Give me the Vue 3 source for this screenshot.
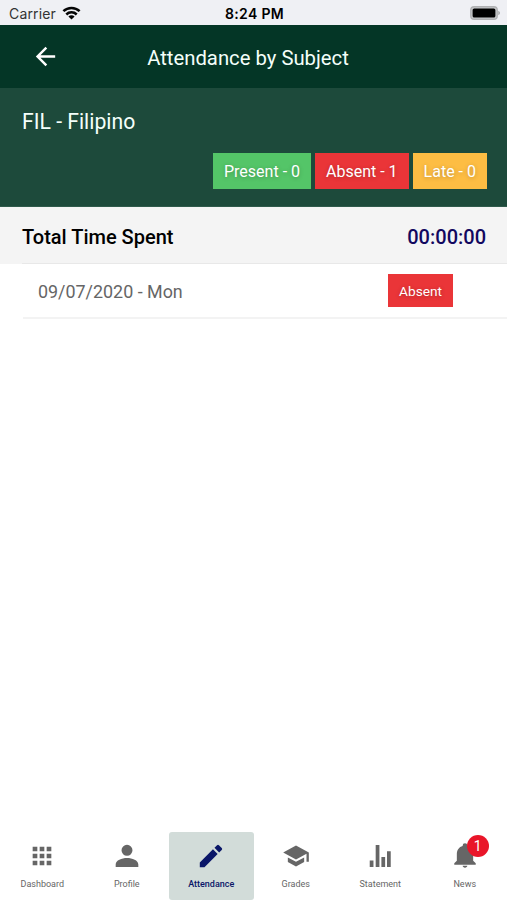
<template>
	<div class="screen">
		<div class="status">
			<div class="carrier">
				<span>Carrier</span>
				<svg class="wifi" viewBox="0 0 18 14">
					<g fill="none" stroke="#050505" stroke-width="2.5">
						<path d="M.9 5.2a11.6 11.6 0 0 1 16.2 0"/>
						<path d="M3.8 8.5a7.4 7.4 0 0 1 10.4 0"/>
					</g>
					<path fill="#050505" d="M9 13.6 5.9 10.5a4.4 4.4 0 0 1 6.2 0z"/>
				</svg>
			</div>
			<span class="clock">8:24 PM</span>
			<svg class="battery" viewBox="0 0 30 14">
				<rect x=".8" y=".7" width="26.4" height="12.6" rx="3.4" fill="#c9cacc" stroke="#b0b1b3" stroke-width="1.4"/>
				<rect x="2.6" y="2.4" width="22.8" height="9.2" rx="1.6" fill="#000"/>
				<path d="M28.3 4.8v4.4q1.7-.7 1.7-2.2t-1.7-2.2z" fill="#a5a6a8"/>
			</svg>
		</div>

		<header class="header">
			<svg class="back" viewBox="0 0 24 24"><path d="M20 11H7.83l5.59-5.59L12 4l-8 8 8 8 1.41-1.41L7.83 13H20v-2z"/></svg>
			<h1>Attendance by Subject</h1>
		</header>

		<section class="subject">
			<h2>FIL - Filipino</h2>
			<div class="counts">
				<span v-for="c in counts" :key="c.type" class="chip" :class="c.type">{{ c.label }} - {{ c.value }}</span>
			</div>
		</section>

		<section class="total">
			<span>Total Time Spent</span>
			<span class="time">00:00:00</span>
		</section>

		<ul class="list">
			<li v-for="r in records" :key="r.date">
				<span class="date">{{ r.date }}</span>
				<span class="chip small absent">{{ r.status }}</span>
			</li>
		</ul>

		<nav class="tabs">
			<a v-for="t in tabs" :key="t.label" class="tab" :class="{active: t.label === current}" @click="current = t.label">
				<span class="icon">
					<svg viewBox="0 0 24 24"><path :d="t.icon"/></svg>
					<span v-if="t.badge" class="badge">{{ t.badge }}</span>
				</span>
				<span class="label">{{ t.label }}</span>
			</a>
		</nav>
	</div>
</template>

<script setup>
import {ref} from 'vue';

const current = ref('Attendance');

const counts = [
	{type: 'present', label: 'Present', value: 0},
	{type: 'absent', label: 'Absent', value: 1},
	{type: 'late', label: 'Late', value: 0},
];

const records = [
	{date: '09/07/2020 - Mon', status: 'Absent'},
];

const tabs = [
	{label: 'Dashboard', icon: 'M4 8h4V4H4v4zm6 12h4v-4h-4v4zm-6 0h4v-4H4v4zm0-6h4v-4H4v4zm6 0h4v-4h-4v4zm6-10v4h4V4h-4zm-6 4h4V4h-4v4zm6 6h4v-4h-4v4zm0 6h4v-4h-4v4z'},
	{label: 'Profile', icon: 'M12 11.8a4.7 4.7 0 1 0 0-9.4 4.7 4.7 0 0 0 0 9.4zM2.3 21.5v-2.2c0-3.6 5.2-5.6 9.7-5.6s9.7 2 9.7 5.6v2.2z'},
	{label: 'Attendance', icon: 'M2.4 17.6v4h4L17.7 10.3l-4-4L2.4 17.6zM21.2 6.8a1.1 1.1 0 0 0 0-1.6l-2.4-2.4a1.1 1.1 0 0 0-1.6 0l-2.2 2.2 4 4 2.2-2.2z'},
	{label: 'Grades', icon: 'M5 13.18v4L12 21l7-3.82v-4L12 17l-7-3.82zM12 3 1 9l11 6 9-4.91V17h2V9L12 3z'},
	{label: 'Statement', icon: 'M3.2 15.8h3.2v5.6H3.2zM8.3 2.5h3.2v18.9H8.3zM13.2 12.8h3.2v8.6h-3.2zM18 8h3.2v13.4H18z'},
	{label: 'News', badge: 1, icon: 'M12 22c1.1 0 2-.7 2-1.6h-4c0 .9.9 1.6 2 1.6zM19 16v-5.5c0-3.5-1.8-6.2-5-7V3a2 2 0 0 0-4 0v.5c-3.2.8-5 3.5-5 7V16l-2.2 2.3v1.1h18.4v-1.1L19 16z'},
];
</script>

<style>
body {
	background: #fff;
}
</style>

<style scoped>
.screen {
	display: flex;
	flex-direction: column;
	height: 900px;
	overflow: hidden;
	background: #fff;
	font-family: Roboto, "Liberation Sans", sans-serif;
	color: #000;
}
h1, h2 {
	margin: 0;
	font-weight: 400;
	color: #f4fffa;
}
.status {
	display: grid;
	grid-template-columns: 1fr auto 1fr;
	align-items: center;
	height: 25px;
	padding: 1px 7px 0 9px;
	box-sizing: border-box;
	background: #eff0f4;
	font-family: Inter, "Liberation Sans", sans-serif;
	font-size: 14px;
}
.carrier {
	display: flex;
	align-items: center;
	gap: 6px;
	color: #333;
	letter-spacing: .15px;
}
.wifi {
	width: 19px;
	height: 14px;
}
.clock {
	font-weight: 600;
	letter-spacing: .35px;
	padding-top: 1px;
}
.battery {
	justify-self: end;
	width: 30px;
	height: 14px;
}
.header {
	display: grid;
	grid-template-columns: 56px 1fr 60px;
	align-items: center;
	height: 63px;
	padding: 0 15px 0 4px;
	background: #043626;
}
.back {
	justify-self: end;
	width: 29px;
	height: 29px;
	fill: #fff;
}
h1 {
	padding: 2px 0 0 4px;
	text-align: center;
	font-size: 20.3px;
}
.subject {
	display: flex;
	flex-direction: column;
	justify-content: space-between;
	height: 119px;
	box-sizing: border-box;
	padding: 21px 20px 17px 22px;
	border-bottom: 1px solid #2f5a4b;
	background: #1d4a3b;
}
h2 {
	font-size: 21.2px;
	line-height: 26px;
}
.counts {
	display: flex;
	justify-content: flex-end;
	gap: 4px;
}
.chip {
	height: 36px;
	padding: 0 11px;
	line-height: 37px;
	font-size: 16px;
	color: #fff;
	text-shadow: 0 1px 4px rgba(0, 0, 0, .25);
}
.present {
	background: #54c568;
}
.absent {
	background: #ea3538;
}
.late {
	background: #fdbd43;
}
.total {
	display: flex;
	justify-content: space-between;
	align-items: center;
	height: 57px;
	box-sizing: border-box;
	padding: 2px 21px 0 22px;
	background: linear-gradient(#e8e8e8, #e8e8e8) 22px 100% / 100% 1px no-repeat #f4f4f4;
	font-size: 20px;
	font-weight: 500;
}
.time {
	color: #12085f;
}
.list {
	flex: 1;
	margin: 0;
	padding: 0 0 0 23px;
	list-style: none;
}
.list li {
	display: flex;
	justify-content: space-between;
	align-items: center;
	height: 53px;
	padding: 0 54px 0 15px;
	border-bottom: 2px solid #f3f3f3;
	font-size: 17.9px;
	color: #666;
}
.date {
	padding-top: 2px;
}
.small {
	height: 33px;
	line-height: 34px;
	font-size: 13.7px;
}
.tabs {
	display: grid;
	grid-template-columns: repeat(6, 1fr);
	height: 68px;
}
.tab {
	display: flex;
	flex-direction: column;
	align-items: center;
	padding-top: 10px;
	color: #666;
}
.active {
	border-radius: 3px;
	background: #d2dcd9;
	color: #0a1668;
}
.icon {
	position: relative;
	height: 28px;
}
.icon svg {
	display: block;
	width: 28px;
	height: 28px;
	fill: currentColor;
}
.badge {
	position: absolute;
	top: -7px;
	left: 16px;
	width: 22px;
	height: 22px;
	border-radius: 50%;
	background: #e91529;
	color: #fff;
	font-size: 14px;
	line-height: 22px;
	text-align: center;
}
.label {
	margin-top: 8px;
	font-size: 9px;
	line-height: 12px;
}
.active .label {
	font-weight: 500;
}
</style>
